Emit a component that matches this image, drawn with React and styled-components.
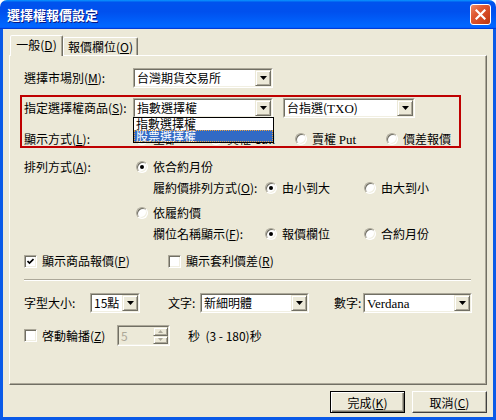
import React from 'react';
import styled, { createGlobalStyle, css } from 'styled-components';

const Global = createGlobalStyle`
  html, body { margin: 0; padding: 0; background: #fff; }
  body {
    font-family: "Noto Sans CJK TC", "Noto Sans", sans-serif;
    font-size: 12px;
    color: #000;
  }
  * { box-sizing: border-box; }
  u { text-underline-offset: 1px; }
`;

const Window = styled.div`
  width: 496px;
  height: 420px;
  display: flex;
  flex-direction: column;
  background: #ece9d8;
  border-radius: 7px 7px 0 0;
  overflow: hidden;
`;

const TitleBar = styled.div`
  height: 29px;
  flex: none;
  display: flex;
  align-items: center;
  padding: 0 5px 0 7px;
  background: linear-gradient(180deg, #0997ff, #0053ee 8%, #0050ee 40%, #0066ff 88%, #0066ff 93%, #005bff 95%, #003dd7 96%, #003dd7);
`;

const Title = styled.div`
  flex: 1;
  color: #fff;
  font-weight: bold;
  font-size: 13px;
  line-height: 16px;
  text-shadow: 1px 1px 0 #0a1883;
`;

const CloseBtn = styled.div`
  width: 21px;
  height: 21px;
  border: 1px solid #fff;
  border-radius: 3px;
  background: linear-gradient(135deg, #ec8a66 0%, #df5a33 35%, #cf4520 70%, #b9360f 100%);
  display: flex;
  align-items: center;
  justify-content: center;
`;

const Frame = styled.div`
  flex: 1;
  display: flex;
  flex-direction: column;
  border-style: solid;
  border-color: #0a5ae8;
  border-width: 0 3px 3px 3px;
  padding: 0 6px;
`;

const TabStrip = styled.div`
  display: flex;
  align-items: flex-end;
  height: 20px;
  margin-top: 6px;
  padding-left: 1px;
`;

const Tab = styled.div`
  width: ${p => p.$w}px;
  height: ${p => (p.$active ? 21 : 18)}px;
  margin-bottom: ${p => (p.$active ? -1 : 0)}px;
  position: relative;
  z-index: ${p => (p.$active ? 2 : 1)};
  background: #ece9d8;
  border-style: solid;
  border-width: 1px 1px 0 1px;
  border-color: #fff #716f64 transparent #fff;
  border-radius: 2px 2px 0 0;
  box-shadow: inset -1px 0 0 #aca899;
  display: flex;
  align-items: center;
  justify-content: center;
  line-height: 14px;
  white-space: nowrap;
  padding-bottom: ${p => (p.$active ? 2 : 0)}px;
`;

const Panel = styled.div`
  height: 330px;
  flex: none;
  border: 1px solid;
  border-color: #fff #716f64 #716f64 #fff;
  box-shadow: inset -1px -1px 0 #aca899;
  padding: 12px 14px 0 14px;
  display: flex;
  flex-direction: column;
`;

const Row = styled.div`
  display: flex;
  align-items: center;
  height: ${p => p.$h ?? 14}px;
  margin-top: ${p => p.$mt ?? 0}px;
  line-height: 14px;
  white-space: nowrap;
  flex: none;
`;

const Label = styled.span`
  flex: none;
  width: ${p => (p.$w ? `${p.$w}px` : 'auto')};
  margin-left: ${p => p.$ml ?? 0}px;
`;

const Serif = styled.span`
  font-family: "Liberation Serif", "Noto Sans CJK TC", serif;
  font-size: 13px;
`;

const Highlight = styled.div`
  margin: 7px 0 0 -4px;
  width: 441px;
  border: 2px solid #bf0000;
  padding: 1px 0 0 2px;
  flex: none;
`;

/* ---- combo box ---- */
const ComboOuter = styled.div`
  position: relative;
  flex: none;
  width: ${p => p.$w}px;
  height: 20px;
  margin-left: ${p => p.$ml ?? 0}px;
  border: 1px solid;
  border-color: #aca899 #fff #fff #aca899;
`;

const ComboInner = styled.div`
  display: flex;
  height: 100%;
  border: 1px solid;
  border-color: #716f64 #f1efe2 #f1efe2 #716f64;
  background: #fff;
`;

const ComboValue = styled.div`
  flex: 1;
  padding-left: 2px;
  line-height: 16px;
  overflow: hidden;
  white-space: nowrap;
`;

const ArrowBtn = styled.div`
  width: 16px;
  height: 16px;
  flex: none;
  background: #ece9d8;
  border: 1px solid;
  border-color: #ece9d8 #716f64 #716f64 #ece9d8;
  box-shadow: inset 1px 1px 0 #fff, inset -1px -1px 0 #aca899;
  display: flex;
  align-items: center;
  justify-content: center;
`;

const DropList = styled.div`
  position: absolute;
  left: -1px;
  top: 18px;
  width: 141px;
  height: 26px;
  z-index: 5;
  background: #fff;
  border: 1px solid #000;
`;

const DropItem = styled.div`
  height: 12px;
  line-height: 12px;
  padding-left: 2px;
  white-space: nowrap;
  ${p =>
    p.$sel &&
    css`
      background: #316ac5;
      color: #fff;
      outline: 1px dotted #e8a040;
      outline-offset: -1px;
    `}
`;

const DownArrow = ({ color = '#000' }) => (
  <svg width="7" height="4" viewBox="0 0 7 4">
    <polygon points="0,0 7,0 3.5,4" fill={color} />
  </svg>
);

const Combo = ({ w, ml, value, list, selected }) => (
  <ComboOuter $w={w} $ml={ml}>
    <ComboInner>
      <ComboValue>{value}</ComboValue>
      <ArrowBtn>
        <DownArrow />
      </ArrowBtn>
    </ComboInner>
    {list && (
      <DropList>
        {list.map((t, i) => (
          <DropItem key={t} $sel={i === selected}>
            {t}
          </DropItem>
        ))}
      </DropList>
    )}
  </ComboOuter>
);

/* ---- radio & checkbox ---- */
const OptionItem = styled.label`
  display: flex;
  align-items: center;
  flex: none;
  width: ${p => (p.$w ? `${p.$w}px` : 'auto')};
  margin-left: ${p => p.$ml ?? 0}px;
`;

const RadioDot = styled.span`
  width: 12px;
  height: 12px;
  flex: none;
  margin-right: 5px;
  border-radius: 50%;
  background: #fff;
  border: 1px solid;
  border-color: #aca899 #fff #fff #aca899;
  box-shadow: inset 1px 1px 0 #716f64, inset -1px -1px 0 #f1efe2;
  display: flex;
  align-items: center;
  justify-content: center;
  &::after {
    content: '';
    width: 4px;
    height: 4px;
    border-radius: 50%;
    background: ${p => (p.$on ? '#000' : 'transparent')};
  }
`;

const CheckBox = styled.span`
  width: 13px;
  height: 13px;
  flex: none;
  margin-right: 5px;
  background: #fff;
  border: 1px solid;
  border-color: #aca899 #fff #fff #aca899;
  box-shadow: inset 1px 1px 0 #716f64, inset -1px -1px 0 #f1efe2;
  display: flex;
  align-items: center;
  justify-content: center;
`;

const Radio = ({ w, ml, on, children }) => (
  <OptionItem $w={w} $ml={ml}>
    <RadioDot $on={on} />
    <span>{children}</span>
  </OptionItem>
);

const Check = ({ w, ml, on, children }) => (
  <OptionItem $w={w} $ml={ml}>
    <CheckBox>
      {on && (
        <svg width="7" height="7" viewBox="0 0 7 7">
          <polyline points="0.5,3 2.5,5 6.5,1" fill="none" stroke="#000" strokeWidth="1.7" />
        </svg>
      )}
    </CheckBox>
    <span>{children}</span>
  </OptionItem>
);

const Separator = styled.div`
  width: 447px;
  height: 2px;
  margin-top: 11px;
  flex: none;
  border-top: 1px solid #aca899;
  border-bottom: 1px solid #fff;
`;

/* ---- spin box ---- */
const SpinOuter = styled.div`
  width: 53px;
  height: 21px;
  flex: none;
  border: 1px solid;
  border-color: #aca899 #fff #fff #aca899;
`;

const SpinInner = styled.div`
  display: flex;
  height: 100%;
  border: 1px solid;
  border-color: #716f64 #f1efe2 #f1efe2 #716f64;
  background: #ece9d8;
`;

const SpinValue = styled.div`
  flex: 1;
  padding-left: 2px;
  line-height: 17px;
  color: #aca899;
`;

const SpinBtns = styled.div`
  width: 15px;
  display: flex;
  flex-direction: column;
`;

const SpinBtn = styled.div`
  flex: 1;
  background: #ece9d8;
  border: 1px solid;
  border-color: #ece9d8 #716f64 #716f64 #ece9d8;
  box-shadow: inset 1px 1px 0 #fff, inset -1px -1px 0 #aca899;
  display: flex;
  align-items: center;
  justify-content: center;
`;

const Spin = () => (
  <SpinOuter>
    <SpinInner>
      <SpinValue>5</SpinValue>
      <SpinBtns>
        <SpinBtn>
          <svg width="5" height="3" viewBox="0 0 5 3">
            <polygon points="0,3 5,3 2.5,0" fill="#aca899" />
          </svg>
        </SpinBtn>
        <SpinBtn>
          <svg width="5" height="3" viewBox="0 0 5 3">
            <polygon points="0,0 5,0 2.5,3" fill="#aca899" />
          </svg>
        </SpinBtn>
      </SpinBtns>
    </SpinInner>
  </SpinOuter>
);

/* ---- bottom buttons ---- */
const ButtonRow = styled.div`
  display: flex;
  justify-content: flex-end;
  gap: 7px;
  margin-top: 6px;
`;

const Button = styled.div`
  width: 75px;
  height: 22px;
  display: flex;
  align-items: center;
  justify-content: center;
  background: #ece9d8;
  border: 1px solid;
  ${p =>
    p.$default
      ? css`
          border-color: #000;
          box-shadow: inset 1px 1px 0 #fff, inset -1px -1px 0 #716f64, inset -2px -2px 0 #aca899;
        `
      : css`
          border-color: #fff #404040 #404040 #fff;
          box-shadow: inset -1px -1px 0 #aca899;
        `}
`;

export default function App() {
  return (
    <>
      <Global />
      <Window>
        <TitleBar>
          <Title>選擇權報價設定</Title>
          <CloseBtn>
            <svg width="11" height="11" viewBox="0 0 11 11">
              <path d="M1.5 1.5 L9.5 9.5 M9.5 1.5 L1.5 9.5" stroke="#fff" strokeWidth="2.2" strokeLinecap="square" />
            </svg>
          </CloseBtn>
        </TitleBar>
        <Frame>
          <TabStrip>
            <Tab $active $w={53}>
              一般(<u>D</u>)
            </Tab>
            <Tab $w={75}>
              報價欄位(<u>O</u>)
            </Tab>
          </TabStrip>
          <Panel>
            <Row $h={20}>
              <Label $w={109}>
                選擇市場別(<u>M</u>):
              </Label>
              <Combo w={140} value="台灣期貨交易所" />
            </Row>

            <Highlight>
              <Row $h={20}>
                <Label $w={109}>
                  指定選擇權商品(<u>S</u>):
                </Label>
                <Combo w={140} value="指數選擇權" list={['指數選擇權', '股票選擇權']} selected={1} />
                <Combo
                  w={132}
                  ml={10}
                  value={
                    <>
                      台指選(<Serif>TXO</Serif>)
                    </>
                  }
                />
              </Row>
              <Row $mt={14}>
                <Label $w={109}>
                  顯示方式(<u>L</u>):
                </Label>
                <Radio w={74} ml={3} on>
                  全部
                </Radio>
                <Radio w={85}>買權 Call</Radio>
                <Radio w={91}>
                  賣權 <Serif>Put</Serif>
                </Radio>
                <Radio>價差報價</Radio>
              </Row>
            </Highlight>

            <Row $mt={12}>
              <Label $w={109}>
                排列方式(<u>A</u>):
              </Label>
              <Radio ml={3} on>
                依合約月份
              </Radio>
            </Row>
            <Row $mt={7}>
              <Label $w={112} $ml={129}>
                履約價排列方式(<u>O</u>):
              </Label>
              <Radio w={99} on>
                由小到大
              </Radio>
              <Radio>由大到小</Radio>
            </Row>
            <Row $mt={11}>
              <Radio ml={112}>依履約價</Radio>
            </Row>
            <Row $mt={7}>
              <Label $w={112} $ml={129}>
                欄位名稱顯示(<u>F</u>):
              </Label>
              <Radio w={99} on>
                報價欄位
              </Radio>
              <Radio>合約月份</Radio>
            </Row>

            <Row $mt={13}>
              <Check w={144} on>
                顯示商品報價(<u>P</u>)
              </Check>
              <Check>
                顯示套利價差(<u>R</u>)
              </Check>
            </Row>

            <Separator />

            <Row $h={20} $mt={12}>
              <Label $w={66}>字型大小:</Label>
              <Combo w={50} value="15點" />
              <Label $w={32} $ml={28}>
                文字:
              </Label>
              <Combo w={109} value="新細明體" />
              <Label $w={29} $ml={25}>
                數字:
              </Label>
              <Combo w={109} value={<Serif>Verdana</Serif>} />
            </Row>

            <Row $h={21} $mt={12}>
              <Check w={93}>
                啓動輪播(<u>Z</u>)
              </Check>
              <Spin />
              <Label $ml={18}>秒&nbsp;&nbsp;(3 - 180)秒</Label>
            </Row>
          </Panel>
          <ButtonRow>
            <Button $default>
              完成(<u>K</u>)
            </Button>
            <Button>
              取消(<u>C</u>)
            </Button>
          </ButtonRow>
        </Frame>
      </Window>
    </>
  );
}
